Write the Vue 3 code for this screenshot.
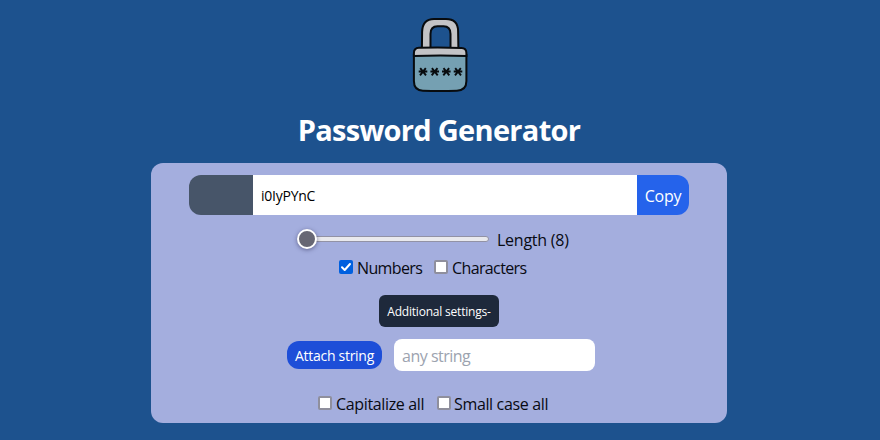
<script setup>
import { ref, computed } from 'vue'

const password = ref('i0IyPYnC')
const length = ref(8)
const numbers = ref(true)
const characters = ref(false)
const attached = ref('')
const capitalize = ref(false)
const smallCase = ref(false)
const min = 8
const max = 50
const thumbOffset = computed(() => `${((length.value - min) / (max - min)) * 172}px`)
const stars = [423, 434.7, 446.3, 458]
</script>

<template>
  <main class="page">
    <svg class="lock" viewBox="410 16 60 78" width="60" height="78" aria-hidden="true">
      <path d="M421.900 49L422.100 32C422.300 23 427 18.900 434 18.900h12C454 18.900 458 23 458.100 31l.3 18h-7.900V34c0-5-2.500-7.700-7-7.700h-6c-4.500 0-7 2.700-7 7.700V49z" fill="#c3c3c6" stroke="#080b0e" stroke-width="2" />
      <path d="M413.900 55v26c0 6 3 9.500 9 9.700q17 .7 34 0c6-.2 9.500-3.700 9.500-9.700V55z" fill="#75a0b2" stroke="#080b0e" stroke-width="2" />
      <path d="M413.900 56v-3q0-5 5-5.200 21-.8 42.500.2 5 .2 5 5v3q-26-1-52.500 0z" fill="#c3c3c6" stroke="#080b0e" stroke-width="2" />
      <path v-for="x in stars" :key="x" :transform="`translate(${x} 71.700)`" d="M-4.300-.2H4.300M-2.800-3.600 3 3.600M2.800-3.600-3 3.600" fill="none" stroke="#080b0e" stroke-width="1.900" />
    </svg>
    <h1 class="title">Password Generator</h1>
    <section class="panel">
      <div class="password-row">
        <div class="swatch"></div>
        <input v-model="password" class="password" readonly />
        <button class="copy">Copy</button>
      </div>
      <div class="length-row">
        <div class="slider">
          <span class="track"></span>
          <span class="thumb" :style="{ left: thumbOffset }"></span>
        </div>
        <span class="text length-text">Length ({{ length }})</span>
      </div>
      <div class="checks">
        <label class="check numbers"><input v-model="numbers" type="checkbox" class="native" /><span class="box"><svg viewBox="0 0 14 14"><path d="M3 7.300 5.700 10 11 4" /></svg></span><span class="text tight">Numbers</span></label>
        <label class="check"><input v-model="characters" type="checkbox" class="native" /><span class="box"></span><span class="text tight">Characters</span></label>
      </div>
      <button class="settings">Additional settings-</button>
      <div class="attach-row">
        <button class="attach">Attach string</button>
        <input v-model="attached" class="any" placeholder="any string" />
      </div>
      <div class="checks case-row">
        <label class="check capitalize"><input v-model="capitalize" type="checkbox" class="native" /><span class="box"></span><span class="text">Capitalize all</span></label>
        <label class="check small"><input v-model="smallCase" type="checkbox" class="native" /><span class="box"></span><span class="text">Small case all</span></label>
      </div>
    </section>
  </main>
</template>

<style>
body {
  background: #1d528e;
}
</style>

<style scoped>
* {
  box-sizing: border-box;
}
.page {
  height: 440px;
  padding-top: 16px;
  display: flex;
  flex-direction: column;
  align-items: center;
  overflow: hidden;
  font-family: "Open Sans", "Noto Sans", sans-serif;
  font-size: 16px;
  line-height: 24px;
  color: #080a12;
}
button,
input {
  font: inherit;
  border: 0;
  outline: 0;
  margin: 0;
  padding: 0;
  white-space: nowrap;
}
button {
  color: #fff;
}
.lock {
  flex: none;
}
.title {
  margin: 18px 2px 0 0;
  height: 36px;
  font-size: 29px;
  line-height: 36px;
  font-weight: 700;
  color: #fff;
  letter-spacing: -0.7px;
  white-space: nowrap;
}
.panel {
  width: 576px;
  height: 260px;
  flex: none;
  margin: 15px 2px 0 0;
  padding-top: 12px;
  border-radius: 12px;
  background: #a4aede;
  display: flex;
  flex-direction: column;
  align-items: center;
}
.password-row {
  width: 500px;
  height: 40px;
  display: flex;
  border-radius: 12px;
  overflow: hidden;
}
.swatch {
  width: 64px;
  background: #475569;
}
.password {
  width: 384px;
  padding: 2px 8px 0;
  background: #fff;
  color: #000;
  font-size: 14px;
  letter-spacing: -0.25px;
}
.copy {
  width: 52px;
  padding-top: 1px;
  background: #2563eb;
  letter-spacing: -0.3px;
}
.text {
  white-space: nowrap;
  letter-spacing: -0.35px;
}
.text.tight {
  letter-spacing: -0.62px;
}
.length-row {
  align-self: flex-start;
  height: 24px;
  margin: 13px 0 0 146px;
  display: flex;
}
.slider {
  position: relative;
  width: 192px;
  height: 22px;
  display: flex;
  align-items: center;
}
.track {
  width: 100%;
  height: 6px;
  border: 1px solid #9292a5;
  border-radius: 3px;
  background: #e9e9ed;
}
.thumb {
  position: absolute;
  top: 1px;
  width: 20px;
  height: 20px;
  border: 2px solid #fff;
  border-radius: 50%;
  background: #676774;
  box-shadow: 0 1px 4px rgb(40 40 80 / 55%);
}
.length-text {
  margin-left: 8px;
  letter-spacing: -0.25px;
}
.checks {
  align-self: flex-start;
  height: 24px;
  display: flex;
  margin: 4px 0 0 188px;
}
.check {
  display: flex;
}
.native {
  position: absolute;
  opacity: 0;
}
.box {
  width: 14px;
  height: 14px;
  margin: 4px 4px 0 0;
  border: 2px solid #8f8f9d;
  border-radius: 2px;
  background: #fff;
  display: flex;
  flex: none;
}
.native:checked + .box {
  border: 0;
  background: #0060df;
}
.box svg {
  width: 14px;
  height: 14px;
  fill: none;
  stroke: #fff;
  stroke-width: 2;
  stroke-linecap: round;
  stroke-linejoin: round;
}
.numbers {
  width: 95px;
}
.settings {
  width: 120px;
  height: 32px;
  margin: 15px 0 0;
  padding-top: 2px;
  flex: none;
  border-radius: 6px;
  background: #1e293b;
  font-size: 12px;
  letter-spacing: -0.2px;
}
.attach-row {
  align-self: flex-start;
  display: flex;
  align-items: center;
  gap: 12px;
  margin: 12px 0 0 136px;
}
.attach {
  width: 95px;
  height: 28px;
  padding-top: 2px;
  border-radius: 12px;
  background: #1d4ed8;
  font-size: 14px;
  line-height: 20px;
  letter-spacing: -0.28px;
}
.any {
  width: 201px;
  height: 32px;
  padding: 2px 8px 0;
  border-radius: 8px;
  background: #fff;
  letter-spacing: -0.5px;
}
.any::placeholder {
  color: #9ca3af;
  opacity: 1;
}
.case-row {
  margin: 21px 0 0 167px;
}
.capitalize {
  width: 119px;
}
.small .box {
  margin-right: 3px;
}
</style>
